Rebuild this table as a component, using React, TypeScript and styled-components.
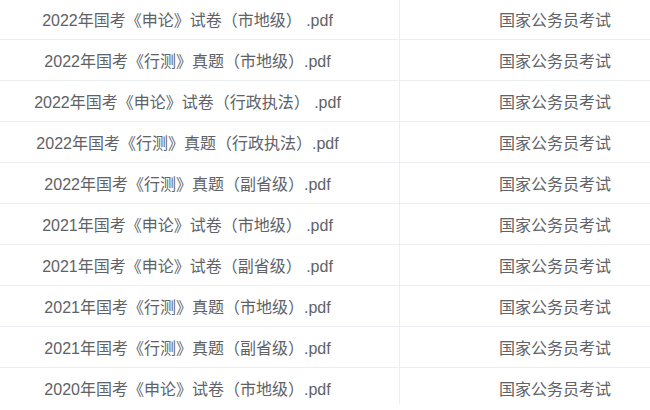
import React from "react";
import styled, { createGlobalStyle } from "styled-components";

const Global = createGlobalStyle`
  html, body { margin: 0; padding: 0; background: #fff; overflow: hidden; }
  body { font-family: "Liberation Sans", "Noto Sans CJK SC", sans-serif; }
`;

const Table = styled.div`
  width: 650px;
  margin-top: -1px;
  display: flex;
  flex-direction: column;
`;

const Row = styled.div`
  display: grid;
  grid-template-columns: 399px 1px 250px;
  height: 41px;
  border-bottom: 1px solid #ebeef5;
  box-sizing: border-box;
  &:last-child {
    border-bottom: none;
    height: 36px;
    align-items: start;
  }
`;

const Cell = styled.div<{ $padLeft?: number; $padRight?: number }>`
  display: flex;
  align-items: center;
  justify-content: center;
  height: 40px;
  padding-left: ${(p) => p.$padLeft ?? 0}px;
  padding-right: ${(p) => p.$padRight ?? 0}px;
  font-size: 16px;
  color: #606266;
  white-space: pre;
  box-sizing: border-box;
`;

const Divider = styled.div`
  background: #ebeef5;
  align-self: stretch;
`;

const rows = [
  "2022年国考《申论》试卷（市地级） .pdf",
  "2022年国考《行测》真题（市地级）.pdf",
  "2022年国考《申论》试卷（行政执法） .pdf",
  "2022年国考《行测》真题（行政执法）.pdf",
  "2022年国考《行测》真题（副省级）.pdf",
  "2021年国考《申论》试卷（市地级） .pdf",
  "2021年国考《申论》试卷（副省级） .pdf",
  "2021年国考《行测》真题（市地级）.pdf",
  "2021年国考《行测》真题（副省级）.pdf",
  "2020年国考《申论》试卷（市地级）.pdf",
];

export default function App() {
  return (
    <>
      <Global />
      <Table>
        {rows.map((r, i) => (
          <Row key={i}>
            <Cell $padRight={24}>{r}</Cell>
            <Divider />
            <Cell $padLeft={60}>国家公务员考试</Cell>
          </Row>
        ))}
      </Table>
    </>
  );
}
